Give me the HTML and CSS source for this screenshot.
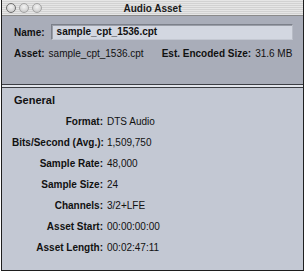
FILE: index.html
```html
<!DOCTYPE html>
<html lang="en">

<head>
  <meta charset="UTF-8">
  <meta name="viewport" content="width=device-width, initial-scale=1.0">
  <title>Audio Asset</title>
  <link rel="stylesheet" href="styles.css">
</head>

<body>
  <div class="window">
    <div class="titlebar">
      <div class="lights">
        <span class="light first"></span>
        <span class="light"></span>
        <span class="light"></span>
      </div>
      <div class="title">Audio Asset</div>
      <div></div>
    </div>

    <div class="top">
      <div class="name-row">
        <span class="label">Name:</span>
        <div class="input">sample_cpt_1536.cpt</div>
      </div>
      <div class="asset-row">
        <span class="label">Asset:</span>
        <span class="value asset-name">sample_cpt_1536.cpt</span>
        <span class="label">Est. Encoded Size:</span>
        <span class="value">31.6 MB</span>
      </div>
    </div>

    <div class="separator"></div>

    <div class="bottom">
      <h2>General</h2>
      <div class="props">
        <span class="label">Format:</span><span class="value">DTS Audio</span>
        <span class="label">Bits/Second (Avg.):</span><span class="value">1,509,750</span>
        <span class="label">Sample Rate:</span><span class="value">48,000</span>
        <span class="label">Sample Size:</span><span class="value">24</span>
        <span class="label">Channels:</span><span class="value">3/2+LFE</span>
        <span class="label">Asset Start:</span><span class="value">00:00:00:00</span>
        <span class="label">Asset Length:</span><span class="value">00:02:47:11</span>
      </div>
    </div>
  </div>
</body>

</html>
```

FILE: styles.css
```css
body {
  font-family: "Liberation Sans", Arial, sans-serif;
  font-size: 10px;
  color: #111;
  background-color: #fff;
  margin: 0;
  padding: 0;
}

.window {
  width: 303px;
  height: 271px;
  margin-left: 1px;
  box-sizing: border-box;
  border: 1px solid #1e1e1e;
  border-top: none;
  display: flex;
  flex-direction: column;
}

.titlebar {
  height: 15px;
  display: grid;
  grid-template-columns: 1fr auto 1fr;
  align-items: center;
  background: repeating-linear-gradient(to bottom, #e6e6e6 0, #e6e6e6 1px, #d2d2d2 1px, #d2d2d2 2px);
  border-bottom: 1px solid #8a8a8a;
}

.lights {
  display: flex;
  gap: 3px;
  padding-left: 4px;
}

.light {
  width: 10px;
  height: 10px;
  border-radius: 50%;
  box-sizing: border-box;
  border: 1px solid #a4a4a4;
  background: radial-gradient(circle at 50% 35%, #f4f4f4 0, #d6d6d6 60%, #bcbcbc 100%);
}

.light.first {
  border-color: #6e6e6e;
}

.title {
  font-weight: bold;
  color: #1a1a1a;
  padding-top: 1px;
}

.top {
  height: 68px;
  box-sizing: border-box;
  background-color: #a9adb9;
  padding: 8px 10px 0 12px;
  white-space: nowrap;
}

.label {
  font-weight: bold;
  white-space: nowrap;
}

.value {
  white-space: nowrap;
}

.name-row {
  display: flex;
  align-items: center;
  gap: 6px;
}

.input {
  flex: 1;
  height: 16px;
  box-sizing: border-box;
  padding: 0 5px;
  line-height: 14px;
  font-weight: bold;
  background-color: #d3d7e1;
  border: 1px solid #7c808a;
  border-right-color: #b8bcc6;
  border-bottom-color: #c4c8d2;
  box-shadow: inset 1px 1px 0 #9a9ea8;
}

.asset-row {
  display: flex;
  align-items: center;
  gap: 4px;
  margin-top: 8px;
}

.asset-name {
  margin-right: 14px;
}

.separator {
  height: 2px;
  background-color: #e2e5ec;
  border-top: 1px solid #3c3e44;
  border-bottom: 1px solid #3c3e44;
}

.bottom {
  flex: 1;
  background-color: #c3c8d3;
  padding: 6px 12px 0 10px;
}

h2 {
  font-size: 11px;
  margin: 0 0 10px 2px;
}

.props {
  display: grid;
  grid-template-columns: 91px auto;
  column-gap: 4px;
  row-gap: 9px;
  line-height: 12px;
}

.props .label {
  text-align: right;
}
```
